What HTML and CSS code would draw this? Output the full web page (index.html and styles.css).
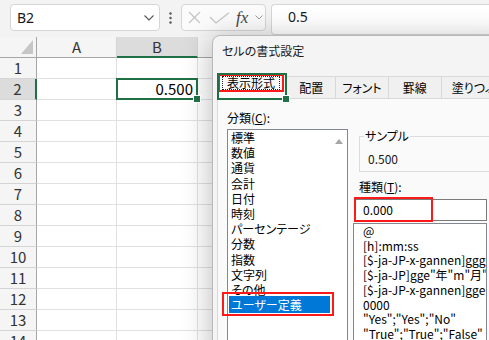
FILE: index.html
```html
<!DOCTYPE html>
<html lang="ja">
<head>
    <meta charset="UTF-8">
    <link rel="stylesheet" href="styles.css">
    <title>セルの書式設定</title>
</head>
<body>
    <!-- formula bar -->
    <div class="formula-bar">
        <div class="name-box">
            <span>B2</span>
            <svg class="chev" width="10" height="6" viewBox="0 0 10 6"><path d="M0.5 0.5 L5 5 L9.5 0.5" fill="none" stroke="#555" stroke-width="1.1"/></svg>
        </div>
        <div class="dots">
            <svg width="3" height="12" viewBox="0 0 3 12"><circle cx="1.5" cy="1.5" r="1.2" fill="#555"/><circle cx="1.5" cy="6" r="1.2" fill="#555"/><circle cx="1.5" cy="10.5" r="1.2" fill="#555"/></svg>
        </div>
        <div class="fx-box">
            <svg class="ico-x" width="13" height="13" viewBox="0 0 13 13"><path d="M1 1 L12 12 M12 1 L1 12" stroke="#c4c4c4" stroke-width="1.2"/></svg>
            <svg class="ico-ok" width="21" height="12" viewBox="0 0 21 12"><path d="M1 5 L7 11 L20 0.8" fill="none" stroke="#c4c4c4" stroke-width="1.2"/></svg>
            <span class="fx">fx</span>
            <svg class="chev-sm" width="8" height="5" viewBox="0 0 8 5"><path d="M0.5 0.5 L4 4 L7.5 0.5" fill="none" stroke="#9a9a9a" stroke-width="1"/></svg>
        </div>
        <div class="formula-input">0.5</div>
    </div>

    <!-- sheet -->
    <div class="sheet">
        <div class="cell corner"><span class="tri"></span></div>
        <div class="cell ch">A</div>
        <div class="cell ch sel">B</div>
        <div class="cell ch"></div>

        <div class="cell rh">1</div><div class="cell"></div><div class="cell"></div><div class="cell"></div>
        <div class="cell rh sel">2</div><div class="cell"></div><div class="cell num active">0.500</div><div class="cell"></div>
        <div class="cell rh">3</div><div class="cell"></div><div class="cell"></div><div class="cell"></div>
        <div class="cell rh">4</div><div class="cell"></div><div class="cell"></div><div class="cell"></div>
        <div class="cell rh">5</div><div class="cell"></div><div class="cell"></div><div class="cell"></div>
        <div class="cell rh">6</div><div class="cell"></div><div class="cell"></div><div class="cell"></div>
        <div class="cell rh">7</div><div class="cell"></div><div class="cell"></div><div class="cell"></div>
        <div class="cell rh">8</div><div class="cell"></div><div class="cell"></div><div class="cell"></div>
        <div class="cell rh">9</div><div class="cell"></div><div class="cell"></div><div class="cell"></div>
        <div class="cell rh">10</div><div class="cell"></div><div class="cell"></div><div class="cell"></div>
        <div class="cell rh">11</div><div class="cell"></div><div class="cell"></div><div class="cell"></div>
        <div class="cell rh">12</div><div class="cell"></div><div class="cell"></div><div class="cell"></div>
        <div class="cell rh">13</div><div class="cell"></div><div class="cell"></div><div class="cell"></div>
        <div class="cell rh">14</div><div class="cell"></div><div class="cell"></div><div class="cell"></div>
    </div>

    <!-- format cells dialog -->
    <div class="dialog">
        <div class="dlg-title">セルの書式設定</div>
        <div class="tabs">
            <div class="tab active"><span class="mark"><span class="focus">表示形式</span></span></div>
            <div class="tab">配置</div>
            <div class="tab">フォント</div>
            <div class="tab">罫線</div>
            <div class="tab">塗りつぶし</div>
        </div>
        <div class="page">
            <div class="col-left">
                <div class="label">分類(<u>C</u>):</div>
                <div class="listbox">
                    <div class="cat-items">
                        <div class="item">標準</div>
                        <div class="item">数値</div>
                        <div class="item">通貨</div>
                        <div class="item">会計</div>
                        <div class="item">日付</div>
                        <div class="item">時刻</div>
                        <div class="item">パーセンテージ</div>
                        <div class="item">分数</div>
                        <div class="item">指数</div>
                        <div class="item">文字列</div>
                        <div class="item">その他</div>
                        <div class="item selected">ユーザー定義</div>
                    </div>
                    <div class="scroll"><span class="up"></span></div>
                </div>
            </div>
            <div class="col-right">
                <fieldset class="sample">
                    <legend>サンプル</legend>
                    <div class="sample-value">0.500</div>
                </fieldset>
                <div class="label type-label">種類(<u>T</u>):</div>
                <div class="type-input">0.000<span class="mark-box"></span></div>
                <div class="format-list">
                    <div class="fmt">@</div>
                    <div class="fmt">[h]:mm:ss</div>
                    <div class="fmt">[$-ja-JP-x-gannen]ggge"年"m"月"d"日"</div>
                    <div class="fmt">[$-ja-JP]gge"年"m"月"d"日"</div>
                    <div class="fmt">[$-ja-JP-x-gannen]gge"年"m"月"d"日"</div>
                    <div class="fmt">0000</div>
                    <div class="fmt">"Yes";"Yes";"No"</div>
                    <div class="fmt">"True";"True";"False"</div>
                </div>
            </div>
        </div>
    </div>
</body>
</html>
```

FILE: styles.css
```css
*{
    box-sizing: border-box;
}

body{
    margin: 0;
    width: 489px;
    height: 340px;
    overflow: hidden;
    position: relative;
    background-color: #fff;
    font-family: "Noto Sans CJK JP", sans-serif;
    color: #000;
}

/* formula bar */
.formula-bar{
    height: 37px;
    background-color: #f3f3f3;
    display: flex;
    align-items: flex-start;
    padding: 4px 0 0 10px;
}

.name-box{
    width: 150px;
    height: 27px;
    background-color: #fff;
    border: 1px solid #d6d6d6;
    border-radius: 4px;
    display: flex;
    align-items: center;
    justify-content: space-between;
    padding: 0 5px 0 6px;
    font: 14px "Noto Sans", sans-serif;
    color: #1a1a1a;
}

.dots{
    width: 21px;
    height: 27px;
    display: flex;
    align-items: center;
    justify-content: center;
}

.fx-box{
    width: 85px;
    height: 27px;
    background-color: #fbfbfb;
    border: 1px solid #d6d6d6;
    border-radius: 4px;
    display: flex;
    align-items: center;
    padding-right: 2px;
}

.ico-x{
    margin-left: 6px;
}

.ico-ok{
    margin-left: 8px;
}

.fx{
    margin-left: 6px;
    font: italic 17px "Liberation Serif", serif;
    color: #444;
    line-height: 20px;
}

.chev-sm{
    margin-left: auto;
}

.formula-input{
    flex: 1;
    margin-left: 5px;
    height: 31px;
    background-color: #fff;
    border: 1px solid #d6d6d6;
    border-right: none;
    border-radius: 4px 0 0 4px;
    padding: 3px 0 0 16px;
    font: 14px "Noto Sans", sans-serif;
    line-height: 18px;
    color: #1a1a1a;
}

/* sheet */
.sheet{
    display: grid;
    grid-template-columns: 37px 80px 81px 1fr;
    grid-auto-rows: 21px;
}

.cell{
    border-right: 1px solid #e1e1e1;
    border-bottom: 1px solid #e1e1e1;
    font-size: 15px;
    line-height: 20px;
    color: #333;
}

.corner{
    background-color: #f5f5f5;
    border-right: 1px solid #a6a6a6;
    border-bottom: 1px solid #a6a6a6;
    display: flex;
    justify-content: flex-end;
    align-items: flex-end;
    padding: 0 3px 3px 0;
}

.tri{
    width: 0;
    height: 0;
    border-left: 12px solid transparent;
    border-bottom: 14px solid #c6c6c6;
}

.ch{
    background-color: #f5f5f5;
    border-right: 1px solid #d4d4d4;
    border-bottom: 1px solid #a6a6a6;
    text-align: center;
}

.ch.sel{
    background-color: #dcdcdc;
    border-bottom: 2px solid #1f7044;
}

.rh{
    background-color: #f5f5f5;
    border-right: 1px solid #a6a6a6;
    border-bottom: 1px solid #d4d4d4;
    text-align: center;
}

.rh.sel{
    background-color: #dcdcdc;
    border-right: 2px solid #1f7044;
}

.num{
    text-align: right;
    padding-right: 4px;
    color: #000;
}

.active{
    position: relative;
}

.active::after{
    content: "";
    position: absolute;
    left: -1px;
    top: -1px;
    right: -1px;
    bottom: -1px;
    border: 2px solid #1f7044;
}

.active::before{
    content: "";
    position: absolute;
    right: -4px;
    bottom: -4px;
    width: 6px;
    height: 6px;
    background-color: #1f7044;
    border: 1px solid #fff;
    z-index: 1;
}

/* dialog */
.dialog{
    position: absolute;
    left: 212px;
    top: 35px;
    width: 300px;
    height: 330px;
    background-color: #f4f4f4;
    border: 1px solid #b9b9b9;
    border-radius: 8px 0 0 0;
    box-shadow: 0 4px 30px rgba(0, 0, 0, 0.28);
    font-size: 12px;
    font-feature-settings: "palt";
}

.dlg-title{
    height: 37px;
    padding: 6px 0 0 9px;
    line-height: 18px;
    color: #1a1a1a;
}

.tabs{
    height: 25px;
    display: flex;
    align-items: flex-end;
    padding-left: 4px;
}

.tab{
    height: 22px;
    background-color: #f0f0f0;
    border: 1px solid #d9d9d9;
    border-left: none;
    border-bottom: none;
    display: flex;
    align-items: center;
    justify-content: center;
    line-height: 16px;
}

.tab:nth-child(2){ width: 50px; }
.tab:nth-child(3){ width: 53px; }
.tab:nth-child(4){ width: 54px; }
.tab:nth-child(5){ width: 70px; justify-content: flex-start; padding-left: 10px; }

.tab.active{
    width: 71px;
    height: 25px;
    position: relative;
    margin-bottom: -1px;
    height: 26px;
    background-color: #fafafa;
    border-left: 1px solid #d9d9d9;
    align-items: flex-start;
    justify-content: flex-start;
}

.mark{
    border: 2px solid #ff1a1a;
    padding: 0 2px;
    height: 18px;
    display: flex;
    align-items: center;
}

.focus{
    border: 1px dotted #222;
    padding: 0 4px;
    line-height: 12px;
}

.page{
    margin-left: 4px;
    height: 260px;
    background-color: #fafafa;
    border: 1px solid #d9d9d9;
    display: flex;
}

.col-left{
    padding-left: 9px;
    width: 131px;
}

.label{
    line-height: 16px;
    margin-top: 11px;
}

.listbox{
    margin-top: 3px;
    width: 121px;
    height: 230px;
    background-color: #fff;
    border: 1px solid #828790;
    display: flex;
}

.cat-items{
    flex: 1;
    padding-left: 1px;
}

.item{
    line-height: 15.2px;
    padding-left: 2px;
    white-space: nowrap;
}

.item.selected{
    position: relative;
    background-color: #0078d7;
    color: #fff;
    padding-top: 1px;
    padding-bottom: 1px;
    margin-top: -1px;
}

.item.selected::after{
    content: "";
    position: absolute;
    left: -7px;
    top: -4px;
    right: -4px;
    bottom: -3px;
    border: 2px solid #ff1a1a;
}

.scroll{
    width: 17px;
    display: flex;
    justify-content: center;
    padding-top: 9px;
}

.up{
    width: 0;
    height: 0;
    border-left: 4px solid transparent;
    border-right: 4px solid transparent;
    border-bottom: 5px solid #a6a6a6;
}

.col-right{
    margin-left: 4px;
    width: 140px;
}

.sample{
    margin: 29px 0 0 6px;
    width: 140px;
    border: 1px solid #dcdcdc;
    padding: 0 0 4px 4px;
}

.sample legend{
    padding: 0 1px;
    line-height: 16px;
}

.sample-value{
    margin: 7px 0 0 4px;
    line-height: 16px;
    color: #1a1a1a;
}

.type-label{
    margin: 7px 0 0 6px;
}

.type-input{
    position: relative;
    margin: 4px 0 0 1px;
    width: 133px;
    height: 22px;
    background-color: #fff;
    border: 1px solid #7a7a7a;
    padding-left: 8px;
    line-height: 20px;
}

.mark-box{
    position: absolute;
    left: -1px;
    top: -3px;
    width: 79px;
    height: 25px;
    border: 2px solid #ff1a1a;
}

.format-list{
    margin-top: 2px;
    width: 134px;
    height: 130px;
    background-color: #fff;
    border: 1px solid #828790;
    padding-left: 9px;
    overflow: hidden;
}

.fmt{
    line-height: 14.7px;
    white-space: nowrap;
}
```
